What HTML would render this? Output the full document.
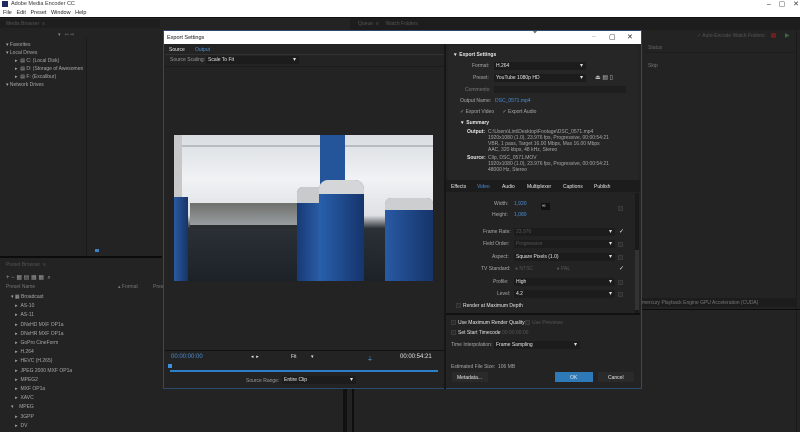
<!DOCTYPE html>
<html><head><meta charset="utf-8"><style>
*{box-sizing:border-box;margin:0;padding:0}
body{width:800px;height:432px;overflow:hidden;background:#232323;font-family:"Liberation Sans",sans-serif;font-size:5px;color:#a8a8a8;position:relative}
.a{position:absolute}
.t{position:absolute;white-space:nowrap}
.dd{position:absolute;background:#1c1c1c;height:8px}
.dd:after{content:"▾";position:absolute;right:3px;top:0;color:#ddd;font-size:6px;line-height:8px}
.w{color:#e6e6e6}
.b{color:#4a90d9}
.cb{position:absolute;width:5px;height:5px;background:#2b2b2b;border:1px solid #3a3a3a}
</style></head><body>
<div class="a" style="left:0;top:0;width:800px;height:18px;background:#fff"></div>
<div class="a" style="left:2px;top:1px;width:6px;height:6px;background:#1e2a5a"></div>
<div class="t" style="left:11px;top:1px;color:#333;font-size:5.5px">Adobe Media Encoder CC</div>
<div class="t" style="left:3px;top:10px;color:#222;font-size:5.5px">File&nbsp;&nbsp; Edit&nbsp;&nbsp; Preset&nbsp;&nbsp; Window&nbsp;&nbsp; Help</div>
<div class="t" style="left:767px;top:0px;color:#333;font-size:7px">–&nbsp;&nbsp;&nbsp; ▢&nbsp;&nbsp;&nbsp; ✕</div>
<div class="a" style="left:0;top:17px;width:800px;height:1px;background:#111"></div>
<div class="a" style="left:0;top:19px;width:160px;height:9px;background:#1e1e1e"></div>
<div class="t" style="left:6px;top:21px;color:#555">Media Browser &nbsp;≡</div>
<div class="a" style="left:86px;top:38px;width:1px;height:218px;background:#1a1a1a"></div>
<div class="t" style="left:58px;top:32px;color:#888">▾ &nbsp; ⇦ ⇨</div>
<div class="t" style="left:6px;top:42px">▾ Favorites</div>
<div class="t" style="left:6px;top:50px">▾ Local Drives</div>
<div class="t" style="left:15px;top:58px">▸ &nbsp;▤ C: (Local Disk)</div>
<div class="t" style="left:15px;top:66px">▸ &nbsp;▤ D: (Storage of Awesomen</div>
<div class="t" style="left:15px;top:74px">▸ &nbsp;▤ F: (Excalibur)</div>
<div class="t" style="left:6px;top:82px">▾ Network Drives</div>
<div class="a" style="left:95px;top:249px;width:4px;height:3px;background:#3a7fc0"></div>
<div class="a" style="left:0;top:256px;width:162px;height:2px;background:#0c0c0c"></div>
<div class="t" style="left:6px;top:262px;color:#555">Preset Browser &nbsp;≡</div>
<div class="t" style="left:6px;top:274px;color:#999;font-size:6px">+ − ▦ ▤ ▦ ▦ &nbsp;⌕</div>
<div class="t" style="left:6px;top:284px;color:#777">Preset Name</div>
<div class="t" style="left:118px;top:284px;color:#777">▴ Format</div>
<div class="t" style="left:153px;top:284px;color:#777">Pres</div>
<div class="t" style="left:11px;top:293px;line-height:9.2px">▾ ▦ Broadcast<br>&nbsp;&nbsp; ▸ &nbsp;AS-10<br>&nbsp;&nbsp; ▸ &nbsp;AS-11<br>&nbsp;&nbsp; ▸ &nbsp;DNxHD MXF OP1a<br>&nbsp;&nbsp; ▸ &nbsp;DNxHR MXF OP1a<br>&nbsp;&nbsp; ▸ &nbsp;GoPro CineForm<br>&nbsp;&nbsp; ▸ &nbsp;H.264<br>&nbsp;&nbsp; ▸ &nbsp;HEVC (H.265)<br>&nbsp;&nbsp; ▸ &nbsp;JPEG 2000 MXF OP1a<br>&nbsp;&nbsp; ▸ &nbsp;MPEG2<br>&nbsp;&nbsp; ▸ &nbsp;MXF OP1a<br>&nbsp;&nbsp; ▸ &nbsp;XAVC<br>▾ &nbsp;&nbsp; MPEG<br>&nbsp;&nbsp; ▸ &nbsp;3GPP<br>&nbsp;&nbsp; ▸ &nbsp;DV</div>
<div class="a" style="left:343px;top:388px;width:4px;height:44px;background:#111"></div>
<div class="a" style="left:350px;top:18px;width:450px;height:12px;background:#1d1d1d"></div>
<div class="t" style="left:358px;top:21px;color:#555">Queue &nbsp;≡ &nbsp;&nbsp;&nbsp; Watch Folders</div>
<div class="t" style="left:697px;top:33px;color:#555">✓ Auto-Encode Watch Folders</div>
<div class="a" style="left:771px;top:33px;width:5px;height:5px;background:#6a2020;border-radius:1px"></div>
<div class="t" style="left:785px;top:32px;color:#3a6a3a;font-size:6px">▶</div>
<div class="t" style="left:648px;top:45px;color:#666">Status</div>
<div class="a" style="left:645px;top:52px;width:150px;height:1px;background:#1c1c1c"></div>
<div class="t" style="left:648px;top:63px;color:#777">Skip</div>
<div class="a" style="left:796px;top:30px;width:1px;height:402px;background:#1a1a1a"></div>
<div class="a" style="left:642px;top:298px;width:155px;height:9px;background:#1c1c1c"></div>
<div class="t" style="left:642px;top:300px;color:#777">mercury Playback Engine GPU Acceleration (CUDA)</div>
<div class="a" style="left:642px;top:309px;width:158px;height:1px;background:#0c0c0c"></div>
<div class="a" style="left:352px;top:388px;width:2px;height:44px;background:#0e0e0e"></div>
<div class="a" style="left:163px;top:30px;width:479px;height:359px;background:#232323;border:1px solid #2c4a6a"></div>
<div class="a" style="left:164px;top:31px;width:477px;height:13px;background:#fff"></div>
<div class="t" style="left:167px;top:35px;color:#111;font-size:5.5px">Export Settings</div>
<div class="t" style="left:533px;top:29px;color:#333;font-size:7px">⌖</div>
<div class="t" style="left:592px;top:33px;color:#aaa;font-size:7px">–</div>
<div class="t" style="left:609px;top:33px;color:#222;font-size:7px">▢</div>
<div class="t" style="left:627px;top:33px;color:#222;font-size:7px">✕</div>
<div class="t w" style="left:169px;top:47px">Source</div>
<div class="t b" style="left:195px;top:47px">Output</div>
<div class="a" style="left:165px;top:54px;width:279px;height:1px;background:#333"></div>
<div class="t" style="left:170px;top:57px;color:#999">Source Scaling:</div>
<div class="dd w" style="left:206px;top:56px;width:93px;padding-left:2px;line-height:8px">Scale To Fit</div>
<div class="a" style="left:165px;top:66px;width:279px;height:1px;background:#1b1b1b"></div>
<!-- image -->
<div class="a" style="left:174px;top:135px;width:259px;height:146px;background:linear-gradient(180deg,#d9dde2 0%,#f0f2f4 30%,#dfe2e5 55%,#2a3036 64%,#1d2228 100%);overflow:hidden">
 <div class="a" style="left:16px;top:68px;width:115px;height:24px;background:linear-gradient(180deg,#6e706c,#9da1a6)"></div>
 <div class="a" style="left:16px;top:90px;width:125px;height:4px;background:#2a2d30"></div>
 <div class="a" style="left:0;top:10px;width:259px;height:2px;background:#b8bcc0"></div>
 <div class="a" style="left:0;top:0;width:8px;height:146px;background:#c8c8c8"></div>
 <div class="a" style="left:0;top:62px;width:14px;height:84px;background:linear-gradient(90deg,#2a5aa0,#163468)"></div>
 <div class="a" style="left:146px;top:0;width:25px;height:55px;background:#24549a"></div>
 <div class="a" style="left:123px;top:52px;width:25px;height:94px;background:linear-gradient(90deg,#173a78,#2c5fa8);border-radius:6px 6px 0 0"></div>
 <div class="a" style="left:123px;top:52px;width:25px;height:16px;background:#c8cacc;border-radius:6px 6px 0 0"></div>
 <div class="a" style="left:145px;top:45px;width:45px;height:101px;background:linear-gradient(90deg,#2860ac,#16346c);border-radius:9px 9px 0 0"></div>
 <div class="a" style="left:145px;top:45px;width:45px;height:14px;background:#d4d6d8;border-radius:9px 9px 0 0"></div>
 <div class="a" style="left:211px;top:63px;width:48px;height:83px;background:linear-gradient(90deg,#285aa4,#15346a);border-radius:6px 6px 0 0"></div>
 <div class="a" style="left:211px;top:63px;width:48px;height:12px;background:#ccced0;border-radius:6px 6px 0 0"></div>
</div>
<div class="a" style="left:165px;top:350px;width:279px;height:1px;background:#111"></div>
<div class="t b" style="left:171px;top:354px;font-size:6px">00:00:00:00</div>
<div class="t w" style="left:251px;top:354px">◂&nbsp; ▸</div>
<div class="t w" style="left:291px;top:354px">Fit</div>
<div class="t w" style="left:311px;top:354px">▾</div>
<div class="t b" style="left:367px;top:354px;font-size:6px">⏚</div>
<div class="t w" style="left:400px;top:354px;font-size:6px">00:00:54:21</div>
<div class="a" style="left:168px;top:364px;width:4px;height:4px;background:#3a8fe0"></div>
<div class="a" style="left:170px;top:370px;width:268px;height:2px;background:#2f7fc8"></div>
<div class="t" style="left:246px;top:378px;color:#999">Source Range:</div>
<div class="dd w" style="left:282px;top:376px;width:74px;padding-left:2px;line-height:8px">Entire Clip</div>
<div class="a" style="left:444px;top:44px;width:2px;height:345px;background:#161616"></div>
<div class="a" style="left:448px;top:46px;width:190px;height:134px;background:#262626"></div>
<div class="t w" style="left:454px;top:52px;font-weight:bold">▾ &nbsp;Export Settings</div>
<div class="t" style="left:472px;top:63px">Format:</div>
<div class="dd w" style="left:494px;top:62px;width:92px;padding-left:2px;line-height:8px">H.264</div>
<div class="t" style="left:473px;top:75px">Preset:</div>
<div class="dd w" style="left:494px;top:74px;width:92px;padding-left:2px;line-height:8px">YouTube 1080p HD</div>
<div class="t" style="left:595px;top:74px;color:#bbb;font-size:6px">⏏ ▤ ▯</div>
<div class="t" style="left:465px;top:87px;color:#777">Comments:</div>
<div class="a" style="left:494px;top:86px;width:132px;height:7px;background:#1e1e1e"></div>
<div class="t" style="left:460px;top:98px">Output Name:</div>
<div class="t b" style="left:495px;top:98px">DSC_0571.mp4</div>
<div class="t" style="left:460px;top:109px">✓ Export Video &nbsp;&nbsp;&nbsp;&nbsp; ✓ Export Audio</div>
<div class="t w" style="left:461px;top:120px;font-weight:bold">▾ &nbsp;Summary</div>
<div class="t w" style="left:467px;top:129px;font-weight:bold">Output:</div>
<div class="t" style="left:488px;top:129px;line-height:6px">C:\Users\Lint\Desktop\Footage\DSC_0571.mp4<br>1920x1080 (1.0), 23.976 fps, Progressive, 00:00:54:21<br>VBR, 1 pass, Target 16.00 Mbps, Max 16.00 Mbps<br>AAC, 320 kbps, 48 kHz, Stereo</div>
<div class="t w" style="left:467px;top:155px;font-weight:bold">Source:</div>
<div class="t" style="left:488px;top:155px;line-height:6px">Clip, DSC_0571.MOV<br>1920x1080 (1.0), 23.976 fps, Progressive, 00:00:54:21<br>48000 Hz, Stereo</div>
<div class="a" style="left:446px;top:180px;width:194px;height:12px;background:#1c1c1c"></div>
<div class="t w" style="left:451px;top:184px">Effects</div>
<div class="t b" style="left:477px;top:184px">Video</div>
<div class="t w" style="left:502px;top:184px">Audio</div>
<div class="t w" style="left:527px;top:184px">Multiplexer</div>
<div class="t w" style="left:563px;top:184px">Captions</div>
<div class="t w" style="left:594px;top:184px">Publish</div>
<div class="a" style="left:635px;top:193px;width:4px;height:120px;background:#1a1a1a"></div>
<div class="a" style="left:635px;top:250px;width:4px;height:60px;background:#333"></div>
<div class="t" style="left:494px;top:201px">Width:</div><div class="t b" style="left:514px;top:201px">1,920</div>
<div class="t" style="left:492px;top:212px">Height:</div><div class="t b" style="left:514px;top:212px">1,080</div>
<div class="a" style="left:541px;top:203px;width:9px;height:7px;background:#111"></div>
<div class="t w" style="left:542px;top:203px">∞</div>
<div class="cb" style="left:618px;top:206px"></div>
<div class="t" style="left:483px;top:229px">Frame Rate:</div>
<div class="dd" style="left:514px;top:228px;width:101px;padding-left:2px;line-height:8px;color:#555">23.976</div>
<div class="t w" style="left:619px;top:228px;font-size:6px">✓</div>
<div class="t" style="left:483px;top:241px">Field Order:</div>
<div class="dd" style="left:514px;top:240px;width:101px;padding-left:2px;line-height:8px;color:#555">Progressive</div>
<div class="cb" style="left:618px;top:242px"></div>
<div class="t" style="left:492px;top:254px">Aspect:</div>
<div class="dd w" style="left:514px;top:253px;width:101px;padding-left:2px;line-height:8px">Square Pixels (1.0)</div>
<div class="cb" style="left:618px;top:255px"></div>
<div class="t" style="left:481px;top:266px">TV Standard:</div>
<div class="t" style="left:515px;top:266px;color:#555">● NTSC &nbsp;&nbsp;&nbsp;&nbsp;&nbsp;&nbsp;&nbsp;&nbsp;&nbsp;&nbsp;&nbsp;&nbsp;&nbsp;&nbsp;&nbsp; ● PAL</div>
<div class="t w" style="left:619px;top:265px;font-size:6px">✓</div>
<div class="t" style="left:493px;top:279px">Profile:</div>
<div class="dd w" style="left:514px;top:278px;width:101px;padding-left:2px;line-height:8px">High</div>
<div class="cb" style="left:618px;top:280px"></div>
<div class="t" style="left:497px;top:291px">Level:</div>
<div class="dd w" style="left:514px;top:290px;width:101px;padding-left:2px;line-height:8px">4.2</div>
<div class="cb" style="left:618px;top:292px"></div>
<div class="cb" style="left:456px;top:303px"></div>
<div class="t w" style="left:463px;top:303px">Render at Maximum Depth</div>
<div class="a" style="left:446px;top:313px;width:194px;height:2px;background:#111"></div>
<div class="cb" style="left:451px;top:320px"></div><div class="t w" style="left:458px;top:320px">Use Maximum Render Quality</div>
<div class="cb" style="left:525px;top:320px"></div><div class="t" style="left:532px;top:320px;color:#555">Use Previews</div>
<div class="cb" style="left:451px;top:330px"></div><div class="t w" style="left:458px;top:330px">Set Start Timecode</div><div class="t" style="left:502px;top:330px;color:#555">00:00:00:00</div>
<div class="t" style="left:451px;top:342px">Time Interpolation:</div>
<div class="dd w" style="left:494px;top:341px;width:86px;padding-left:2px;line-height:8px">Frame Sampling</div>
<div class="t" style="left:451px;top:364px">Estimated File Size: &nbsp;106 MB</div>
<div class="a" style="left:452px;top:372px;width:36px;height:10px;background:#2a2a2a"></div>
<div class="t w" style="left:457px;top:375px">Metadata...</div>
<div class="a" style="left:555px;top:372px;width:38px;height:10px;background:#2e7ab8"></div>
<div class="t w" style="left:570px;top:375px">OK</div>
<div class="a" style="left:598px;top:372px;width:36px;height:10px;background:#2a2a2a"></div>
<div class="t w" style="left:608px;top:375px">Cancel</div>
</body></html>
